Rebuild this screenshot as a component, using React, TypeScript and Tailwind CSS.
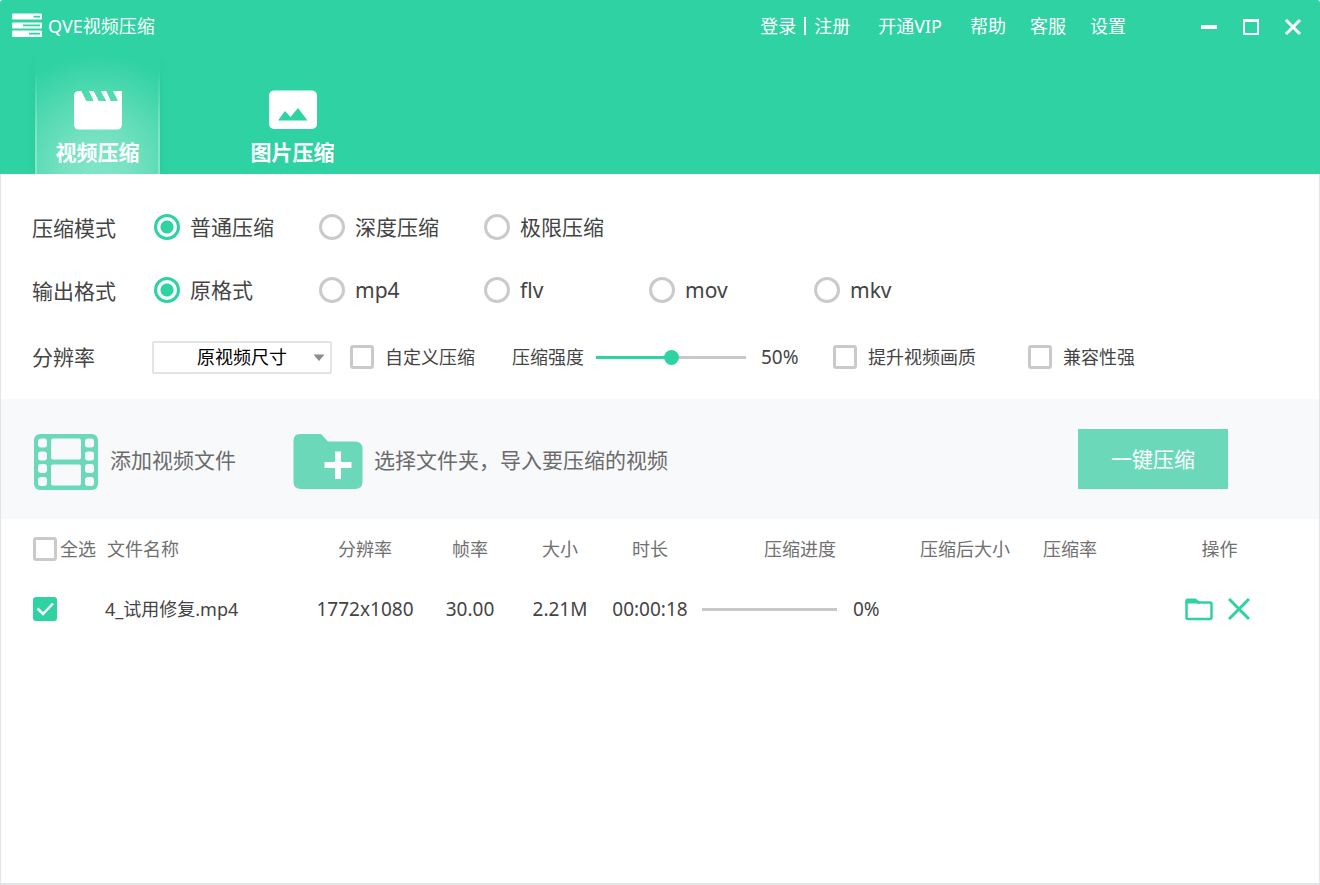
import React, { useState } from 'react';

const MODES = ['普通压缩', '深度压缩', '极限压缩'];
const FORMATS = ['原格式', 'mp4', 'flv', 'mov', 'mkv'];

// 左上角 logo
const LogoIcon = () => (
  <svg width="30" height="26" viewBox="0 0 30 26">
    <rect y="0.500" width="30" height="6" rx="1" fill="#fff" />
    <rect y="9.500" width="30" height="6" rx="1" fill="#fff" />
    <rect y="17.500" width="30" height="6.500" rx="1" fill="#fff" />
    <path d="M21.500 3.700h6.500M11 12.300h17M17 20.700h11" stroke="#2ed2a3" strokeWidth="1.700" />
  </svg>
);

const ClapperIcon = () => (
  <svg width="50" height="40" viewBox="0 0 50 40">
    <path
      d="M6 1H8.300L13.300 11H20.700L16 1H20.700L25.700 11H33.300L27.700 1H33.300L37.700 11H45L40 1H49V34Q49 39.500 44 39.500H6Q1 39.500 1 34V6Q1 1 6 1Z"
      fill="#fff"
    />
  </svg>
);

const PictureIcon = () => (
  <svg width="50" height="40" viewBox="0 0 50 40">
    <rect x="1" y="0.500" width="48" height="38.500" rx="5" fill="#fff" />
    <path d="M10 30.500L17 21L22.500 27L30 18L39.500 30.500Z" fill="#2ed2a3" />
  </svg>
);

const FilmIcon = () => (
  <svg className="mt-[3px]" width="66" height="58" viewBox="0 0 66 58">
    <rect x="1" y="1" width="64" height="56" rx="6" fill="#6bd9b9" />
    <g fill="#f8f9fb">
      <rect x="18" y="5.500" width="30" height="21" rx="2" />
      <rect x="18" y="31.500" width="30" height="21" rx="2" />
      {[5.5, 18.5, 31, 44].map(y => (
        <React.Fragment key={y}>
          <rect x="5" y={y} width="9" height="9" rx="3" />
          <rect x="52" y={y} width="9" height="9" rx="3" />
        </React.Fragment>
      ))}
    </g>
  </svg>
);

const FolderAddIcon = () => (
  <svg className="mt-[3px]" width="70" height="56" viewBox="0 0 70 56">
    <path
      d="M7 0H28L35 7.500H62Q69.500 7.500 69.500 15V48Q69.500 55 62 55H8Q0.500 55 0.500 48V7Q0.500 0 7 0Z"
      fill="#6bd9b9"
    />
    <path d="M45 17.500V45M31.500 31H58.500" stroke="#fff" strokeWidth="6" />
  </svg>
);

const CheckBox = ({ label, checked = false }: { label: string; checked?: boolean }) => {
  const [on, setOn] = useState(checked);
  return (
    <span className="relative flex size-6 shrink-0">
      <input
        type="checkbox"
        aria-label={label}
        checked={on}
        onChange={() => setOn(!on)}
        className="size-6 appearance-none rounded-[3px] border-3 border-[#cacaca] bg-white checked:border-[#2ed2a3] checked:bg-[#2ed2a3]"
      />
      {on && (
        <svg className="pointer-events-none absolute inset-0" width="24" height="24" viewBox="0 0 24 24">
          <path d="M4.500 11.500L10 17L20 6.500" fill="none" stroke="#fff" strokeWidth="2.500" />
        </svg>
      )}
    </span>
  );
};

const LabeledCheck = ({ label }: { label: string }) => (
  <label className="flex items-center gap-[11px]">
    <CheckBox label={label} />
    {label}
  </label>
);

const RadioRow = ({ title, name, items }: { title: string; name: string; items: string[] }) => {
  const [value, setValue] = useState(items[0]);
  return (
    <div className="flex h-[63px] items-center text-[21px]">
      <span className="w-[122px] pt-[2px]">{title}</span>
      {items.map(item => (
        <label key={item} className="flex w-[165px] items-center gap-[10px]">
          <input
            type="radio"
            name={name}
            checked={value === item}
            onChange={() => setValue(item)}
            className="size-[26px] appearance-none rounded-full border-3 border-[#cacaca] bg-white checked:border-[#2ed2a3] checked:bg-[radial-gradient(circle,#2ed2a3_6px,#fff_7px)]"
          />
          {item}
        </label>
      ))}
    </div>
  );
};

const Tab = ({ title, active, children }: { title: string; active?: boolean; children: React.ReactNode }) => (
  <button className="relative flex w-[125px] flex-col items-center gap-[10px] pt-9">
    {/* 选中时的光晕和两侧亮边 */}
    {active && (
      <>
        <span className="absolute inset-0 bg-[radial-gradient(ellipse_110px_120px_at_50%_100%,#80e5c8_0%,#77e2c2_30%,#4fd9b0_70%,#2ed2a3_100%)] shadow-[0_10px_8px_-2px_#1fb88c80] [clip-path:inset(0_-8px_0_-8px)]" />
        <span className="absolute inset-0 border-x-2 border-[#a0ecd5] opacity-60 [mask-image:linear-gradient(to_top,black_30%,transparent_90%)]" />
      </>
    )}
    <span className="relative">{children}</span>
    <span className="relative text-[21px] leading-6 font-bold">{title}</span>
  </button>
);

const App: React.FC = () => {
  const [strength, setStrength] = useState(50);

  return (
    <div className="flex min-h-screen flex-col bg-white font-['Noto_Sans','Noto_Sans_CJK_SC',sans-serif] text-lg leading-6 text-[#444]">
      <header className="flex h-[174px] flex-col rounded-t-[3px] bg-[#2ed2a3] text-white">
        <div className="flex h-[54px] items-center pr-[6px] pb-[2px] pl-3">
          <LogoIcon />
          <h1 className="pl-[6px]">QVE视频压缩</h1>
          <nav className="ml-auto flex items-center gap-6">
            <div className="flex items-center gap-2">
              <a href="#login">登录</a>
              <span className="h-[18px] w-[2px] bg-white" />
              <a href="#register">注册</a>
            </div>
            <a href="#vip" className="px-1">开通VIP</a>
            <a href="#help">帮助</a>
            <a href="#service">客服</a>
            <a href="#settings">设置</a>
          </nav>
          <div className="ml-[62px] flex pt-[2px]">
            <button aria-label="最小化" className="flex w-[42px] justify-center">
              <svg width="18" height="18" viewBox="0 0 18 18"><path d="M1 9h16" stroke="#fff" strokeWidth="4" /></svg>
            </button>
            <button aria-label="最大化" className="flex w-[42px] justify-center">
              <svg width="18" height="18" viewBox="0 0 18 18" fill="none" stroke="#fff">
                <rect x="2" y="2" width="14" height="14" strokeWidth="2" />
                <path d="M1 2.500h16" strokeWidth="3" />
              </svg>
            </button>
            <button aria-label="关闭" className="flex w-[42px] justify-center">
              <svg width="18" height="18" viewBox="0 0 18 18"><path d="M2 2L16 16M16 2L2 16" stroke="#fff" strokeWidth="3" /></svg>
            </button>
          </div>
        </div>
        <div className="flex flex-1 items-stretch gap-[70px] pl-[35px]">
          <Tab title="视频压缩" active><ClapperIcon /></Tab>
          <Tab title="图片压缩"><PictureIcon /></Tab>
        </div>
      </header>

      <main className="flex-1 border-x border-b-2 border-[#e2e4e6]">
        {/* 压缩参数 */}
        <section className="px-[31px] pt-[21px] pb-[6px]">
          <RadioRow title="压缩模式" name="mode" items={MODES} />
          <RadioRow title="输出格式" name="format" items={FORMATS} />
          <div className="flex h-[72px] items-center">
            <label htmlFor="size" className="w-[120px] text-[21px]">分辨率</label>
            <span className="relative mr-[18px] flex w-[180px]">
              <select
                id="size"
                className="h-[33px] w-full appearance-none rounded-[2px] border-2 border-[#e4e4e4] bg-white text-center text-black"
              >
                <option>原视频尺寸</option>
              </select>
              <svg className="pointer-events-none absolute top-[13px] right-[7px]" width="12" height="8" viewBox="0 0 12 8">
                <path d="M0.500 0.500H11.500L6 7Z" fill="#8c8c8c" />
              </svg>
            </span>
            <LabeledCheck label="自定义压缩" />
            <label htmlFor="strength" className="mr-3 ml-[37px]">压缩强度</label>
            <input
              id="strength"
              type="range"
              value={strength}
              onChange={e => setStrength(Number(e.target.value))}
              className="h-[3px] w-[150px] appearance-none bg-[#c8c8c8] [&::-webkit-slider-thumb]:size-[15px] [&::-webkit-slider-thumb]:appearance-none [&::-webkit-slider-thumb]:rounded-full [&::-webkit-slider-thumb]:bg-[#2ed2a3]"
              style={{ backgroundImage: `linear-gradient(to right, #2ed2a3 ${strength}%, transparent ${strength}%)` }}
            />
            <span className="ml-[15px] w-[72px] text-[19px]">{strength}%</span>
            <LabeledCheck label="提升视频画质" />
            <span className="w-[52px]" />
            <LabeledCheck label="兼容性强" />
          </div>
        </section>

        {/* 添加文件 */}
        <section className="flex h-[120px] items-center bg-[#f8f9fb] pr-[91px] pl-8 text-[21px] text-[#6b6b6b]">
          <button className="flex items-center gap-[11px] pt-[2px]">
            <FilmIcon />
            添加视频文件
          </button>
          <button className="ml-[57px] flex items-center gap-[11px] pt-[2px]">
            <FolderAddIcon />
            选择文件夹，导入要压缩的视频
          </button>
          <button className="ml-auto h-[60px] w-[150px] bg-[#6bd9b9] text-white">一键压缩</button>
        </section>

        {/* 文件列表 */}
        <table className="w-full table-fixed">
          <colgroup>
            <col className="w-[104px]" />
            <col />
            <col className="w-[110px]" />
            <col className="w-[100px]" />
            <col className="w-[80px]" />
            <col className="w-[100px]" />
            <col className="w-[200px]" />
            <col className="w-[130px]" />
            <col className="w-[80px]" />
            <col className="w-[209px]" />
          </colgroup>
          <thead className="text-[#707070]">
            <tr className="h-[60px] [&>th]:font-normal">
              <th className="pl-8">
                <label className="flex items-center gap-[3px] whitespace-nowrap">
                  <CheckBox label="全选" />
                  全选
                </label>
              </th>
              <th className="pl-[2px] text-left">文件名称</th>
              <th>分辨率</th>
              <th>帧率</th>
              <th>大小</th>
              <th>时长</th>
              <th>压缩进度</th>
              <th>压缩后大小</th>
              <th>压缩率</th>
              <th className="pl-[10px]">操作</th>
            </tr>
          </thead>
          <tbody>
            <tr className="h-[60px] text-center text-[19px]">
              <td className="pl-8"><CheckBox label="4_试用修复.mp4" checked /></td>
              <td className="text-left text-lg">4_试用修复.mp4</td>
              <td>1772x1080</td>
              <td>30.00</td>
              <td>2.21M</td>
              <td>00:00:18</td>
              <td>
                <div className="flex items-center gap-4 pl-[2px]">
                  <div role="progressbar" aria-valuenow={0} className="h-[3px] w-[135px] bg-[#c8c8c8]" />
                  0%
                </div>
              </td>
              <td />
              <td />
              <td>
                <div className="flex items-center justify-center gap-[14px] pl-1">
                  <button aria-label="打开文件夹">
                    <svg width="30" height="24" viewBox="0 0 30 24">
                      <path d="M2.500 5V20.500Q2.500 22 4 22H26Q27.500 22 27.500 20.500V7Q27.500 5.500 26 5.500H13" fill="none" stroke="#2ed2a3" strokeWidth="2.500" />
                      <path d="M1.250 6.500V3.500Q1.250 1.500 3.500 1.500H11.500L15.500 4.500V6.500Z" fill="#2ed2a3" />
                    </svg>
                  </button>
                  <button aria-label="删除">
                    <svg width="22" height="22" viewBox="0 0 22 22">
                      <path d="M1 1L21 21M21 1L1 21" stroke="#2ed2a3" strokeWidth="3" />
                    </svg>
                  </button>
                </div>
              </td>
            </tr>
          </tbody>
        </table>
      </main>
    </div>
  );
};

export default App;
